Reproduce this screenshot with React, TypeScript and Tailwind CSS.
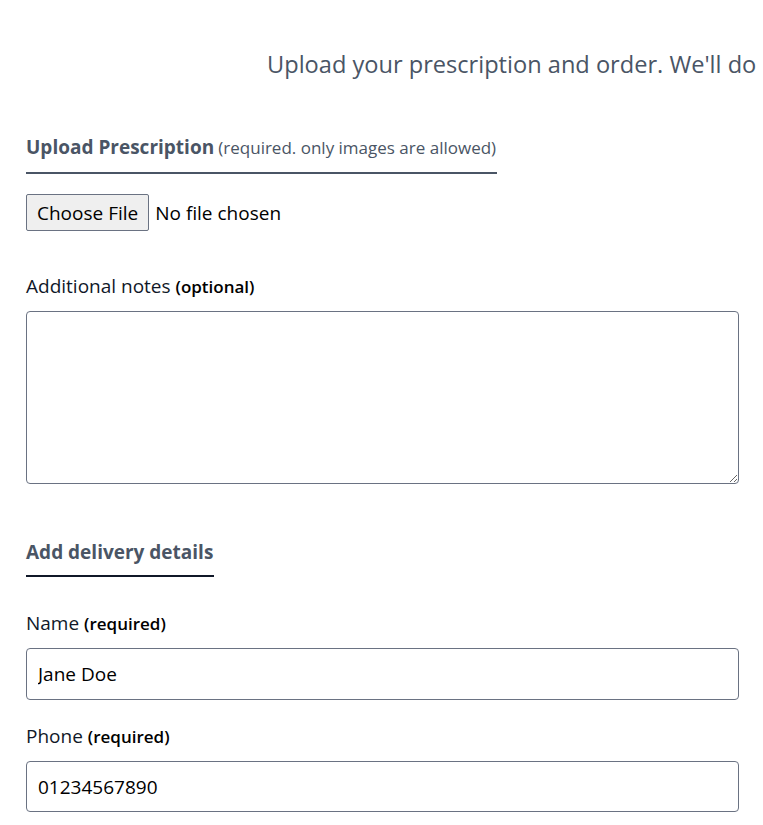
import { useState } from 'react';

const font = "font-['Segoe_UI','Open_Sans','Noto_Sans',sans-serif]";

export default function App() {
  const [notes, setNotes] = useState('');
  const [name, setName] = useState('Jane Doe');
  const [phone, setPhone] = useState('01234567890');

  return (
    <div className={`${font} bg-white min-h-screen overflow-hidden`}>
      <p className="pt-[48px] pl-[267px] whitespace-nowrap text-[23.6px] leading-[32px] text-gray-600">
        Upload your prescription and order. We'll do
      </p>

      <form className="pl-[26px] pr-[24px] pt-[53px]">
        <div className="inline-block border-b-2 border-gray-600 pb-[10px] pr-px text-gray-600">
          <span className="text-[19px] leading-[28px] font-bold">Upload Prescription</span>{' '}
          <span className="text-[17px] leading-[28px]">(required. only images are allowed)</span>
        </div>

        <div className="mt-[20px]">
          <input
            type="file"
            accept="image/*"
            className="text-[19px] leading-[28px] text-black file:mr-[6px] file:h-[37px] file:rounded-[2px] file:border file:border-gray-500 file:bg-[#efefef] file:px-[10px] file:text-[19px] file:text-black"
          />
        </div>

        <label className="mt-[41px] block text-[19px] leading-[28px] text-gray-900">
          Additional notes <span className="text-[17px] font-semibold text-black">(optional)</span>
        </label>
        <textarea
          value={notes}
          onChange={(e) => setNotes(e.target.value)}
          className="mt-[10px] block h-[173px] w-full rounded-[4px] border border-gray-500 px-3 py-2 text-[19px]"
        />

        <div className="mt-[54px] inline-block border-b-2 border-gray-900 pb-[9px] pr-px text-[19px] leading-[28px] font-bold text-gray-600">
          Add delivery details
        </div>

        <label className="mt-[32px] block text-[19px] leading-[28px] text-gray-900">
          Name <span className="text-[17px] font-semibold text-black">(required)</span>
        </label>
        <input
          type="text"
          value={name}
          onChange={(e) => setName(e.target.value)}
          className="mt-[10px] block h-[52px] w-full rounded-[4px] border border-gray-500 px-[11px] text-[19px] text-black"
        />

        <label className="mt-[22px] block text-[19px] leading-[28px] text-gray-900">
          Phone <span className="text-[17px] font-semibold text-black">(required)</span>
        </label>
        <input
          type="tel"
          value={phone}
          onChange={(e) => setPhone(e.target.value)}
          className="mt-[10px] block h-[51px] w-full rounded-[4px] border border-gray-500 px-[11px] text-[19px] text-black"
        />
      </form>
    </div>
  );
}
